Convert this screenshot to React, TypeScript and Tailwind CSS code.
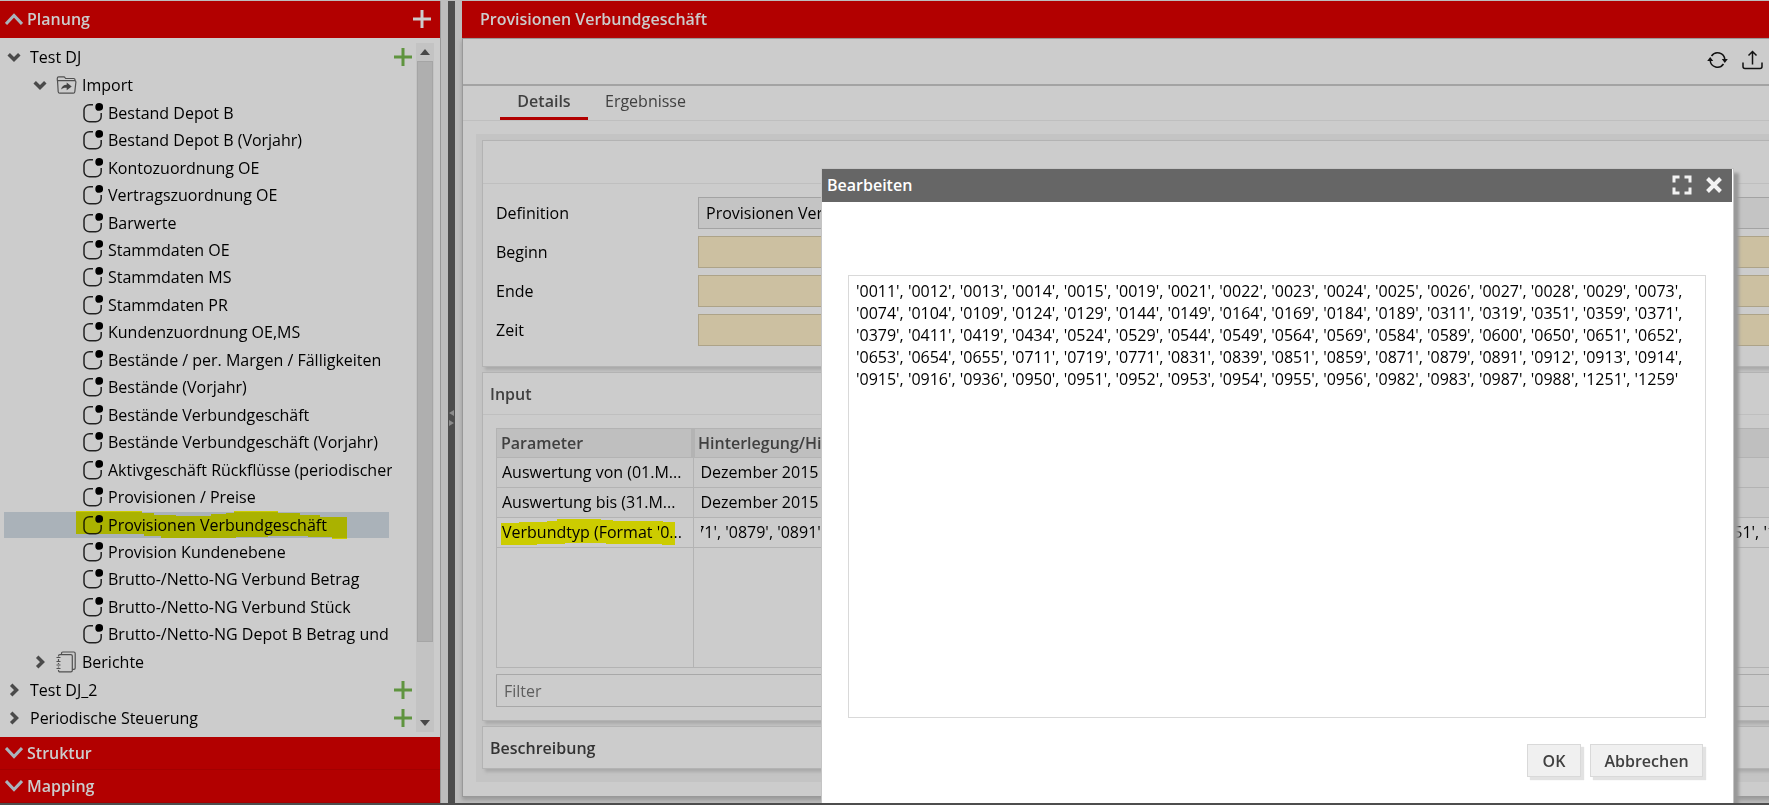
import type { ReactNode } from 'react';

const IMPORTS = [
  'Bestand Depot B',
  'Bestand Depot B (Vorjahr)',
  'Kontozuordnung OE',
  'Vertragszuordnung OE',
  'Barwerte',
  'Stammdaten OE',
  'Stammdaten MS',
  'Stammdaten PR',
  'Kundenzuordnung OE,MS',
  'Bestände / per. Margen / Fälligkeiten',
  'Bestände (Vorjahr)',
  'Bestände Verbundgeschäft',
  'Bestände Verbundgeschäft (Vorjahr)',
  'Aktivgeschäft Rückflüsse (periodischer',
  'Provisionen / Preise',
  'Provisionen Verbundgeschäft',
  'Provision Kundenebene',
  'Brutto-/Netto-NG Verbund Betrag',
  'Brutto-/Netto-NG Verbund Stück',
  'Brutto-/Netto-NG Depot B Betrag und S',
];

const SELECTED = 'Provisionen Verbundgeschäft';

const CODES = [
  '0011', '0012', '0013', '0014', '0015', '0019', '0021', '0022', '0023', '0024', '0025', '0026', '0027', '0028', '0029', '0073',
  '0074', '0104', '0109', '0124', '0129', '0144', '0149', '0164', '0169', '0184', '0189', '0311', '0319', '0351', '0359', '0371',
  '0379', '0411', '0419', '0434', '0524', '0529', '0544', '0549', '0564', '0569', '0584', '0589', '0600', '0650', '0651', '0652',
  '0653', '0654', '0655', '0711', '0719', '0771', '0831', '0839', '0851', '0859', '0871', '0879', '0891', '0912', '0913', '0914',
  '0915', '0916', '0936', '0950', '0951', '0952', '0953', '0954', '0955', '0956', '0982', '0983', '0987', '0988', '1251', '1259',
];

const quote = (codes: string[]) => codes.map((c) => `'${c}'`).join(', ');

function Chevron({ open }: { open: boolean }) {
  return (
    <svg width="14" height="14" viewBox="0 0 14 14" fill="none" stroke="#4a4a4a" strokeWidth="3.500" className="shrink-0">
      <path d={open ? 'M1.700 4.200l5.300 5.300L12.300 4.200' : 'M4.200 1.700l5.300 5.300L4.200 12.300'} />
    </svg>
  );
}

function HeaderChevron({ up }: { up?: boolean }) {
  return (
    <svg width="18" height="12" viewBox="0 0 18 12" fill="none" stroke="#a9b4bc" strokeWidth="3" className="shrink-0">
      <path d={up ? 'M1 11l8-8.500L17 11' : 'M1 1l8 8.500L17 1'} />
    </svg>
  );
}

function Plus({ color }: { color: string }) {
  return (
    <svg width="18" height="18" viewBox="0 0 18 18" fill={color}>
      <path d="M7.500 0h3v7.500H18v3h-7.500V18h-3v-7.500H0v-3h7.500z" />
    </svg>
  );
}

function JobIcon() {
  return (
    <svg width="20" height="20" viewBox="0 0 20 20" fill="none" className="shrink-0">
      <path d="M10 1.700H6.500C3.500 1.700 1 4 1 7v6.500c0 3 2.500 5.300 5.500 5.300h6.200c3 0 5.500-2.300 5.500-5.300V10" stroke="#222" strokeWidth="1.500" />
      <circle cx="16.200" cy="3.900" r="3.900" fill="#000" />
    </svg>
  );
}

function FolderIcon() {
  return (
    <svg width="21" height="18" viewBox="0 0 21 18" fill="none" className="shrink-0">
      <path d="M1.500 4.500l.7 11.200c.1 1 .6 1.500 1.500 1.500h13.600c.9 0 1.400-.5 1.500-1.500L19.900 6c0-.9-.4-1.400-1.300-1.400zM1.300 4.500V2.300C1.300 1.400 1.800.8 2.700.8h5.100c.7 0 1 .3 1.300.9l.5.8h8c.9 0 1.400.5 1.400 1.300v.8" stroke="#505050" strokeWidth="1.200" />
      <path d="M5 13.500c.7-3 2.700-4.700 5.700-4.700V6.500l5 4-5 3.700v-2.400c-2.300-.2-4.100.2-5.700 1.700z" fill="#444" />
    </svg>
  );
}

function ReportIcon() {
  return (
    <svg width="21" height="22" viewBox="0 0 21 22" fill="none" stroke="#505050" strokeWidth="1.200" className="shrink-0">
      <path d="M2.500 5.500V5c0-.8.6-1.400 1.400-1.400h11c.8 0 1.400.6 1.400 1.400v14.500c0 .8-.6 1.400-1.400 1.400h-11c-.8 0-1.400-.6-1.400-1.400V19M2.500 8v2M2.500 12v1M2.500 15.500v1M.5 6.500h4M.5 10.500h4M.5 14h4M.5 17.500h4" />
      <path d="M5.500 3.500V2.200C5.500 1.500 6 1 6.800 1h11c.8 0 1.400.6 1.400 1.400v14.500c0 .8-.6 1.400-1.400 1.400h-1.500" />
    </svg>
  );
}

function TreeRow({ open, label, icon, indent }: { open: boolean; label: string; icon?: ReactNode; indent?: boolean }) {
  return (
    <div className={indent ? 'flex h-7 shrink-0 items-center pl-[29px]' : 'flex h-7 shrink-0 items-center pl-[3px]'}>
      <Chevron open={open} />
      {icon ? <span className="mr-1 ml-[9px] flex w-[22px]">{icon}</span> : <span className="w-[9px]" />}
      <span>{label}</span>
    </div>
  );
}

function Sidebar() {
  return (
    <aside className="flex w-[441px] shrink-0 flex-col border-r border-[#999] bg-[#ccc]">
      <div className="flex h-[37px] shrink-0 items-center bg-[#b20000] pr-[9px] pb-0.5 pl-[5px] font-semibold text-[#ccc]">
        <HeaderChevron up />
        <h2 className="ml-1 flex-1">Planung</h2>
        <button aria-label="Neue Planung"><Plus color="#ccc" /></button>
      </div>

      <div className="flex min-h-0 flex-1 pt-[5px] pr-[6px] pb-[5px] pl-1">
        <div className="flex min-w-0 flex-1 flex-col overflow-hidden whitespace-nowrap">
          <TreeRow open label="Test DJ" />
          <TreeRow open indent label="Import" icon={<FolderIcon />} />
          {IMPORTS.map((name) => (
            <div key={name} className="relative flex min-h-0 flex-1 items-center">
              <div className={name === SELECTED ? 'flex h-[26px] w-[385px] items-center bg-[#aab2b9] pl-[79px]' : 'flex w-full items-center pl-[79px]'}>
                <JobIcon />
                <span className="ml-[5px]">{name}</span>
              </div>
              {name === SELECTED && (
                <svg width="272" height="28" viewBox="0 0 272 28" fill="#ff0" className="absolute top-0 left-[72px] mix-blend-multiply">
                  <path d="M0 0h66v2h12v2h22v1h35V3h15V2h8V0h44v2h22v2h20v2h27v22h-15v-2h-24v-1h-40v1h-32v1H85v-2H68v-2H0z" />
                </svg>
              )}
            </div>
          ))}
          <TreeRow open={false} indent label="Berichte" icon={<ReportIcon />} />
          <TreeRow open={false} label="Test DJ_2" />
          <TreeRow open={false} label="Periodische Steuerung" />
        </div>

        <div className="flex w-6 flex-col pl-0.5">
          <button aria-label="Hinzufügen: Test DJ" className="flex h-7 items-center"><Plus color="#5f943f" /></button>
          <span className="flex-1" />
          <button aria-label="Hinzufügen: Test DJ_2" className="flex h-7 items-center"><Plus color="#5f943f" /></button>
          <button aria-label="Hinzufügen: Periodische Steuerung" className="flex h-7 items-center"><Plus color="#5f943f" /></button>
        </div>

        {/* Scrollbar */}
        <div className="flex w-[18px] flex-col items-center bg-[#c3c3c3]">
          <svg width="10" height="18" viewBox="0 0 10 18" fill="#484848"><path d="M0 12l5-6 5 6z" /></svg>
          <div className="w-4 flex-[580] border border-[#a5a5a5] bg-[#afafaf]" />
          <div className="flex-[72]" />
          <svg width="10" height="18" viewBox="0 0 10 18" fill="#484848"><path d="M0 6l5 6 5-6z" /></svg>
        </div>
      </div>

      {['Struktur', 'Mapping'].map((name) => (
        <button key={name} className="flex h-[33px] shrink-0 items-center border-b border-[#a30000] bg-[#b20000] pl-[5px] font-semibold text-[#ccc]">
          <HeaderChevron />
          <span className="ml-1">{name}</span>
        </button>
      ))}
    </aside>
  );
}

function Splitter() {
  return (
    <div className="mx-[7px] flex w-[7px] shrink-0 items-center justify-center bg-[#4d4d4d] pt-8">
      <svg width="5" height="16" viewBox="0 0 5 16" fill="#8c8c8c">
        <path d="M5 0v6L0 3zM0 10v6l5-3z" />
      </svg>
    </div>
  );
}

function Field({ id, label, value }: { id: string; label: string; value?: string }) {
  return (
    <div className="flex items-center">
      <label htmlFor={id} className="w-[202px] shrink-0">{label}</label>
      <input
        id={id}
        readOnly
        defaultValue={value}
        className={
          value
            ? 'h-8 min-w-0 flex-1 border border-[#a3a3a3] bg-[#c4c4c4] px-[7px]'
            : 'h-8 min-w-0 flex-1 border border-[#ada388] bg-[#ccc0a1] px-[7px]'
        }
      />
    </div>
  );
}

function ParameterTable() {
  return (
    <div className="h-60 border border-[#b3b3b3]">
      <table className="h-full w-full table-fixed border-collapse">
        <thead>
          <tr className="h-7 border-b border-[#b3b3b3] bg-[#bfbfbf] text-left text-[#404040]">
            <th className="w-[196px] border-r-4 border-[#b3b3b3] px-1 py-0 font-semibold">Parameter</th>
            <th className="px-[3px] py-0 font-semibold whitespace-nowrap">Hinterlegung/Hinweis</th>
          </tr>
        </thead>
        <tbody>
          {['Auswertung von (01.M...', 'Auswertung bis (31.M...'].map((name) => (
            <tr key={name} className="h-[30px] border-b border-[#b3b3b3] bg-[#c8c8c8]">
              <td className="border-r border-[#b3b3b3] px-[5px] py-0 whitespace-nowrap">{name}</td>
              <td className="px-[7px] py-0">Dezember 2015</td>
            </tr>
          ))}
          <tr className="h-[30px] border-b border-[#b3b3b3]">
            <td className="relative border-r border-[#b3b3b3] px-[5px] py-0 whitespace-nowrap">
              Verbundtyp (Format '0...
              <svg width="174" height="26" viewBox="0 0 174 26" fill="#ff0" className="absolute top-px left-1 mix-blend-multiply">
                <path d="M0 4h18V3h28V2h10V0h44v1h12v1h50v1h12v23h-13v-1h-56v-1H64v1H36v1H0z" />
              </svg>
            </td>
            <td className="px-[7px] py-0">
              {/* scrolled to the end of the value */}
              <div className="flex justify-end overflow-hidden whitespace-nowrap">
                <span>{quote(CODES.slice(58))}</span>
              </div>
            </td>
          </tr>
          <tr>
            <td className="border-r border-[#b3b3b3]" />
            <td />
          </tr>
        </tbody>
      </table>
    </div>
  );
}

function MainPanel() {
  return (
    <main className="-mr-16 flex min-w-0 flex-1 flex-col">
      <h1 className="flex h-[37px] shrink-0 items-center bg-[#b20000] pb-0.5 pl-[18px] font-semibold text-[#ccc]">Provisionen Verbundgeschäft</h1>
      <div className="flex flex-1 flex-col border border-[#999] bg-[#ccc] shadow-[0_3px_4px_#999]">
        <div className="flex h-[47px] shrink-0 items-center justify-end gap-[14px] border-b-2 border-[#a3a3a3] pr-[69px] pb-[3px]">
          <button aria-label="Aktualisieren">
            <svg width="21" height="20" viewBox="0 0 21 20" fill="none" stroke="#111" strokeWidth="1.500">
              <path d="M4.500 6a7.300 7.300 0 0 1 13.300 3.500M16.500 14A7.300 7.300 0 0 1 3.200 10.500" />
              <path d="M14.800 9h6l-3 4zM.2 11h6l-3-4z" fill="#111" stroke="none" />
            </svg>
          </button>
          <button aria-label="Exportieren">
            <svg width="21" height="20" viewBox="0 0 21 20" fill="none" stroke="#111" strokeWidth="1.500">
              <path d="M10.500 14.500V1.500M6.500 5.500l4-4 4 4M1 12.500v4c0 1.400.7 2 2 2h15c1.300 0 2-.6 2-2v-4" />
            </svg>
          </button>
        </div>

        <nav className="flex h-[35px] shrink-0 border-b border-[#bfbfbf] pl-[37px] text-[#404040]">
          <button className="w-[88px] border-b-3 border-[#b20000] pb-0.5 font-semibold">Details</button>
          <button className="border-b-3 border-transparent px-[17px] pb-0.5">Ergebnisse</button>
        </nav>

        <div className="mt-[13px] mb-[14px] ml-[13px] flex flex-1 flex-col gap-[5px] bg-[#c4c4c4] py-[6px] pl-[6px]">
          <section className="border border-[#b3b3b3] bg-[#ccc] shadow-[3px_3px_3px_#aaa]">
            <div className="h-[43px] border-b border-[#bfbfbf]" />
            <form className="flex flex-col gap-[7px] pt-[13px] pr-4 pb-5 pl-[13px]">
              <Field id="definition" label="Definition" value="Provisionen Verbundgeschäft" />
              <Field id="beginn" label="Beginn" />
              <Field id="ende" label="Ende" />
              <Field id="zeit" label="Zeit" />
            </form>
          </section>

          <section className="border border-[#b3b3b3] bg-[#ccc] shadow-[3px_3px_3px_#aaa]">
            <h2 className="flex h-[42px] items-center border-b border-[#bfbfbf] pl-[7px] font-semibold text-[#404040]">Input</h2>
            <div className="flex flex-col gap-[6px] py-[13px] pr-4 pl-[13px]">
              <ParameterTable />
              <input aria-label="Filter" placeholder="Filter" className="h-[33px] border border-[#a8a8a8] px-[7px] placeholder:text-[#5e5e5e]" />
            </div>
          </section>

          <section className="border border-[#b3b3b3] bg-[#ccc] shadow-[3px_3px_3px_#aaa]">
            <h2 className="flex h-[41px] items-center pl-[7px] font-semibold text-[#333]">Beschreibung</h2>
          </section>
        </div>
      </div>
    </main>
  );
}

function EditDialog() {
  return (
    <div
      role="dialog"
      aria-labelledby="dialog-title"
      className="absolute top-[167px] right-[35px] -bottom-0.5 left-[821px] flex flex-col border border-b-0 border-[#c4c4c4] bg-white shadow-[5px_5px_3px_#999]"
    >
      <div className="mr-px flex h-[33px] shrink-0 items-center bg-[#666] pr-[10px] pb-px pl-[5px] text-white">
        <h2 id="dialog-title" className="flex-1 font-semibold">Bearbeiten</h2>
        <button aria-label="Maximieren" className="mr-[14px]">
          <svg width="20" height="20" viewBox="0 0 20 20" fill="none" stroke="#f2f2f2" strokeWidth="3">
            <path d="M2 7.500V2h5.500M12.500 2H18v5.500M18 12.500V18h-5.500M7.500 18H2v-5.500" />
          </svg>
        </button>
        <button aria-label="Schließen">
          <svg width="16" height="16" viewBox="0 0 16 16" fill="none" stroke="#f2f2f2" strokeWidth="4">
            <path d="M1.500 1.500l13 13M14.500 1.500l-13 13" />
          </svg>
        </button>
      </div>
      <textarea
        aria-label="Verbundtyp"
        defaultValue={quote(CODES)}
        className="mt-[73px] mr-[27px] mb-[26px] ml-[26px] flex-1 resize-none border border-[#d9d9d9] px-[7px] py-1 leading-[22px]"
      />
      <div className="mr-[30px] mb-7 flex justify-end gap-[9px] font-semibold text-[#404040]">
        <button className="h-[33px] w-[54px] border border-[#d9d9d9] bg-[#f0f0f0] shadow-[3px_3px_1px_#e2e2e2]">OK</button>
        <button className="h-[33px] w-[113px] border border-[#d9d9d9] bg-[#f0f0f0] shadow-[3px_3px_1px_#e2e2e2]">Abbrechen</button>
      </div>
    </div>
  );
}

export default function App() {
  return (
    <div className="relative flex h-screen overflow-hidden border-t border-b-2 border-t-[#bdbdbd] border-b-[#4d4d4d] bg-[#bdbdbd] font-['Open_Sans',sans-serif] text-base text-black">
      <Sidebar />
      <Splitter />
      <div className="flex min-w-0 flex-1 pb-[6px]">
        <MainPanel />
      </div>
      <EditDialog />
    </div>
  );
}
